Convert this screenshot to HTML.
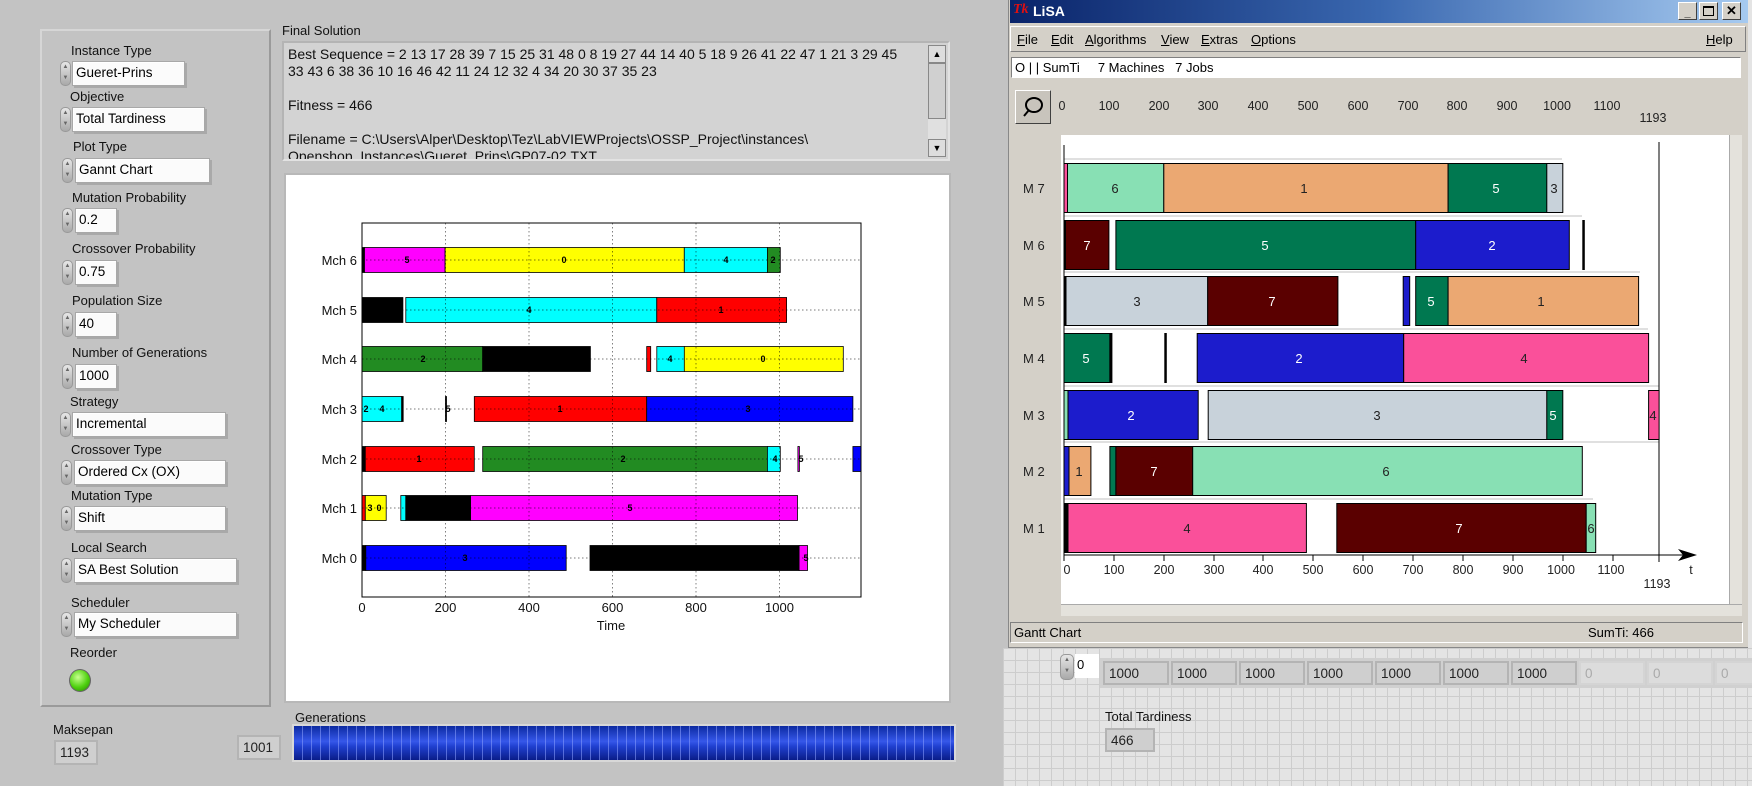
<!DOCTYPE html>
<html><head><meta charset="utf-8"><style>
*{margin:0;padding:0;box-sizing:border-box}
body{width:1752px;height:786px;overflow:hidden;background:#c3c3c3;font-family:"Liberation Sans",sans-serif;position:relative}
.a{position:absolute;white-space:nowrap}
.lbl{position:absolute;font-size:13px;color:#111;white-space:nowrap}
.box{position:absolute;background:#fbfbfb;border:1px solid #a8a8a8;box-shadow:inset 1px 1px 0 #fff, 2px 2px 0 #a9a9a9;font-size:13.5px;padding:3px 3px;height:25px}
.spin{position:absolute;width:11px;height:25px;border-radius:5px;background:linear-gradient(#e6e6e6,#a9a9a9);border:1px solid #999;font-size:6px;line-height:11px;text-align:center;color:#666}
.ro{position:absolute;background:#cfcfcf;border:2px solid #b4b4b4;font-size:13.5px;padding:3px 4px;color:#222}
.menu{font-size:13px;color:#000}
.menu u{text-decoration:underline}
</style></head><body>

<div class="a" style="left:40px;top:29px;width:231px;height:678px;border:2px solid #d6d6d6;border-right-color:#9a9a9a;border-bottom-color:#9a9a9a;background:#c3c3c3"></div>

<div class="lbl" style="left:71px;top:43px">Instance Type</div>
<div class="spin" style="left:60px;top:61px">▲<br>▼</div><div class="box" style="left:72px;top:61px;width:113px">Gueret-Prins</div>
<div class="lbl" style="left:70px;top:89px">Objective</div>
<div class="spin" style="left:60px;top:107px">▲<br>▼</div><div class="box" style="left:72px;top:107px;width:133px">Total Tardiness</div>
<div class="lbl" style="left:73px;top:139px">Plot Type</div>
<div class="spin" style="left:62px;top:158px">▲<br>▼</div><div class="box" style="left:75px;top:158px;width:135px">Gannt Chart</div>
<div class="lbl" style="left:72px;top:190px">Mutation Probability</div>
<div class="spin" style="left:62px;top:208px">▲<br>▼</div><div class="box" style="left:75px;top:208px;width:42px">0.2</div>
<div class="lbl" style="left:72px;top:241px">Crossover Probability</div>
<div class="spin" style="left:62px;top:260px">▲<br>▼</div><div class="box" style="left:75px;top:260px;width:42px">0.75</div>
<div class="lbl" style="left:72px;top:293px">Population Size</div>
<div class="spin" style="left:62px;top:312px">▲<br>▼</div><div class="box" style="left:75px;top:312px;width:42px">40</div>
<div class="lbl" style="left:72px;top:345px">Number of Generations</div>
<div class="spin" style="left:62px;top:364px">▲<br>▼</div><div class="box" style="left:75px;top:364px;width:42px">1000</div>
<div class="lbl" style="left:70px;top:394px">Strategy</div>
<div class="spin" style="left:60px;top:412px">▲<br>▼</div><div class="box" style="left:72px;top:412px;width:154px">Incremental</div>
<div class="lbl" style="left:71px;top:442px">Crossover Type</div>
<div class="spin" style="left:61px;top:460px">▲<br>▼</div><div class="box" style="left:74px;top:460px;width:152px">Ordered Cx (OX)</div>
<div class="lbl" style="left:71px;top:488px">Mutation Type</div>
<div class="spin" style="left:61px;top:506px">▲<br>▼</div><div class="box" style="left:74px;top:506px;width:152px">Shift</div>
<div class="lbl" style="left:71px;top:540px">Local Search</div>
<div class="spin" style="left:61px;top:558px">▲<br>▼</div><div class="box" style="left:74px;top:558px;width:163px">SA Best Solution</div>
<div class="lbl" style="left:71px;top:595px">Scheduler</div>
<div class="spin" style="left:61px;top:612px">▲<br>▼</div><div class="box" style="left:74px;top:612px;width:163px">My Scheduler</div>
<div class="lbl" style="left:70px;top:645px">Reorder</div>
<div class="a" style="left:69px;top:669px;width:22px;height:23px;border-radius:50%;background:radial-gradient(circle at 40% 35%,#c8ff90,#4ed10e 55%,#2a7a08);border:1px solid #666"></div>

<div class="lbl" style="left:53px;top:722px">Maksepan</div>
<div class="ro" style="left:54px;top:740px;width:44px;height:25px">1193</div>
<div class="ro" style="left:237px;top:735px;width:44px;height:25px">1001</div>
<div class="lbl" style="left:295px;top:710px">Generations</div>
<div class="a" style="left:292px;top:724px;width:664px;height:38px;border:2px solid #d8d8d8;background:repeating-linear-gradient(90deg,transparent 0 8px,rgba(140,160,255,.55) 8px 9px),linear-gradient(#0c2aa0,#3658ea 45%,#2040d0 60%,#0a1c88)"></div>

<div class="lbl" style="left:282px;top:23px">Final Solution</div>
<div class="a" style="left:282px;top:41px;width:668px;height:120px;background:#d3d3d3;border:2px solid #b4b4b4;border-right-color:#e2e2e2;border-bottom-color:#e2e2e2;overflow:hidden">
<div style="font-size:14px;line-height:17px;padding:3px 4px;color:#111;white-space:normal;width:625px">Best Sequence = 2 13 17 28 39 7 15 25 31 48 0 8 19 27 44 14 40 5 18 9 26 41 22 47 1 21 3 29 45 33 43 6 38 36 10 16 46 42 11 24 12 32 4 34 20 30 37 35 23<br><br>Fitness = 466<br><br>Filename = C:\Users\Alper\Desktop\Tez\LabVIEWProjects\OSSP_Project\instances\ Openshop_Instances\Gueret_Prins\GP07-02.TXT</div>
<div style="position:absolute;left:644px;top:2px;width:18px;height:112px;background:#e0e0e0">
<div style="height:18px;background:#ddd;border:1px solid #888;font-size:9px;text-align:center;line-height:16px">▲</div>
<div style="height:56px;background:#d0d0d0;border:1px solid #888"></div>
<div style="position:absolute;bottom:0;width:18px;height:18px;background:#ddd;border:1px solid #888;font-size:9px;text-align:center;line-height:16px">▼</div></div>
</div>

<div class="a" style="left:284px;top:173px;width:667px;height:530px;background:#fff;border:2px solid #b8b8b8"></div>

<div class="a" style="left:1008px;top:0;width:742px;height:648px;background:#d4d0c8;border:1px solid #888;border-top:none"></div>
<div class="a" style="left:1010px;top:0;width:738px;height:23px;background:linear-gradient(90deg,#0a246a,#3a68b0 50%,#a6caf0)"></div>
<div class="a" style="left:1013px;top:2px;font:italic bold 14px 'Liberation Serif',serif;color:#e01010">Tk</div>
<div class="a" style="left:1033px;top:3px;font-weight:bold;font-size:14px;color:#fff">LiSA</div>
<div class="a" style="left:1678px;top:2px;width:19px;height:18px;background:#d4d0c8;border:1px solid;border-color:#fff #404040 #404040 #fff;font-size:11px;text-align:center;line-height:20px;font-weight:bold">_</div>
<div class="a" style="left:1699px;top:2px;width:19px;height:18px;background:#d4d0c8;border:1px solid;border-color:#fff #404040 #404040 #fff"><div style="margin:3px;width:11px;height:10px;border:1px solid #000;border-top-width:2px"></div></div>
<div class="a" style="left:1722px;top:2px;width:19px;height:18px;background:#d4d0c8;border:1px solid;border-color:#fff #404040 #404040 #fff;font-size:13px;text-align:center;line-height:16px;font-weight:bold">✕</div>
<div class="a" style="left:1010px;top:26px;width:736px;height:26px;border:1px solid;border-color:#fff #808080 #808080 #fff"></div>
<div class="a menu" style="left:1017px;top:32px"><u>F</u>ile</div>
<div class="a menu" style="left:1051px;top:32px"><u>E</u>dit</div>
<div class="a menu" style="left:1085px;top:32px"><u>A</u>lgorithms</div>
<div class="a menu" style="left:1161px;top:32px"><u>V</u>iew</div>
<div class="a menu" style="left:1201px;top:32px"><u>E</u>xtras</div>
<div class="a menu" style="left:1251px;top:32px"><u>O</u>ptions</div>
<div class="a menu" style="left:1706px;top:32px"><u>H</u>elp</div>
<div class="a" style="left:1011px;top:57px;width:730px;height:21px;background:#fff;border:1px solid;border-color:#808080 #fff #fff #808080;font-size:13px;padding:2px 3px">O | | SumTi &nbsp;&nbsp;&nbsp; 7 Machines &nbsp; 7 Jobs</div>
<div class="a" style="left:1015px;top:90px;width:36px;height:34px;background:#c8c4bc;border:1px solid;border-color:#fff #404040 #404040 #fff"></div>
<svg class="a" style="left:1015px;top:90px" width="36" height="34"><ellipse cx="19" cy="15" rx="8" ry="7" fill="none" stroke="#000" stroke-width="2"/><line x1="14" y1="20" x2="9" y2="26" stroke="#000" stroke-width="2"/></svg>
<div class="a" style="left:1061px;top:135px;width:668px;height:469px;background:#fff"></div>
<div class="a" style="left:1729px;top:135px;width:13px;height:469px;background:#e4e2dc;border-left:1px solid #aaa"></div>
<div class="a" style="left:1061px;top:604px;width:681px;height:12px;background:#e4e2dc;border-top:1px solid #aaa"></div>
<div class="a" style="left:1010px;top:622px;width:733px;height:21px;border:1px solid;border-color:#808080 #fff #fff #808080;font-size:13px;padding:2px 3px">Gantt Chart<span style="position:absolute;left:577px">SumTi: 466</span></div>

<div class="a" style="left:1003px;top:648px;width:749px;height:138px;background-color:#e4e4e4;background-image:linear-gradient(90deg,#cdcdcd 1px,transparent 1px),linear-gradient(#cdcdcd 1px,transparent 1px);background-size:12px 12px"></div>
<div class="a" style="left:1748px;top:0;width:4px;height:648px;background:#e4e4e4"></div>
<div class="spin" style="left:1060px;top:654px;height:26px;width:14px">▲<br>▼</div>
<div class="a" style="left:1075px;top:654px;width:24px;height:24px;background:#fff;font-size:13px;padding:3px 2px">0</div>
<div class="a" style="left:1100px;top:658px;width:652px;height:30px;background:#d0d0d0"></div>
<div class="ro" style="left:1103px;top:661px;width:66px;height:24px">1000</div>
<div class="ro" style="left:1171px;top:661px;width:66px;height:24px">1000</div>
<div class="ro" style="left:1239px;top:661px;width:66px;height:24px">1000</div>
<div class="ro" style="left:1307px;top:661px;width:66px;height:24px">1000</div>
<div class="ro" style="left:1375px;top:661px;width:66px;height:24px">1000</div>
<div class="ro" style="left:1443px;top:661px;width:66px;height:24px">1000</div>
<div class="ro" style="left:1511px;top:661px;width:66px;height:24px">1000</div>
<div class="ro" style="left:1579px;top:661px;width:66px;height:24px;background:#dcdcdc;color:#aaa;border-color:#d4d4d4">0</div>
<div class="ro" style="left:1647px;top:661px;width:66px;height:24px;background:#dcdcdc;color:#aaa;border-color:#d4d4d4">0</div>
<div class="ro" style="left:1715px;top:661px;width:66px;height:24px;background:#dcdcdc;color:#aaa;border-color:#d4d4d4">0</div>
<div class="lbl" style="left:1105px;top:709px">Total Tardiness</div>
<div class="ro" style="left:1105px;top:728px;width:50px;height:24px">466</div>

<svg class="a" style="left:0;top:0" width="1752" height="786" font-family="Liberation Sans, sans-serif">
<g stroke="#000" stroke-width="0.8">
<rect x="362" y="247.5" width="2.5" height="25" fill="#000"/><rect x="364.5" y="247.5" width="80.6" height="25" fill="#f0f"/><rect x="445.1" y="247.5" width="239.2" height="25" fill="#ff0"/><rect x="684.3" y="247.5" width="83.1" height="25" fill="#0ff"/><rect x="767.4" y="247.5" width="12.9" height="25" fill="#228b22"/>
<rect x="362" y="297.5" width="40.9" height="25" fill="#000"/><rect x="405.8" y="297.5" width="250.9" height="25" fill="#0ff"/><rect x="656.8" y="297.5" width="129.8" height="25" fill="#f00"/>
<rect x="362" y="346.5" width="120.7" height="25" fill="#228b22"/><rect x="482.7" y="346.5" width="107.7" height="25" fill="#000"/><rect x="646.7" y="346.5" width="4" height="25" fill="#f00"/><rect x="656.8" y="346.5" width="27.6" height="25" fill="#0ff"/><rect x="684.3" y="346.5" width="159" height="25" fill="#ff0"/>
<rect x="362" y="396.5" width="39.7" height="25" fill="#0ff"/><rect x="401.7" y="396.5" width="1.5" height="25" fill="#000"/><rect x="445.5" y="396.5" width="1" height="25" fill="#000"/><rect x="474.3" y="396.5" width="172.4" height="25" fill="#f00"/><rect x="646.7" y="396.5" width="206.2" height="25" fill="#00f"/>
<rect x="362" y="446.5" width="3.3" height="25" fill="#000"/><rect x="365.3" y="446.5" width="109" height="25" fill="#f00"/><rect x="482.7" y="446.5" width="284.7" height="25" fill="#228b22"/><rect x="767.4" y="446.5" width="12.9" height="25" fill="#0ff"/><rect x="797.9" y="446.5" width="1.5" height="25" fill="#f0f"/><rect x="852.9" y="446.5" width="8.1" height="25" fill="#00f"/>
<rect x="362" y="495.5" width="3.3" height="25" fill="#f00"/><rect x="365.3" y="495.5" width="20.9" height="25" fill="#ff0"/><rect x="400.8" y="495.5" width="5" height="25" fill="#0ff"/><rect x="405.8" y="495.5" width="64.7" height="25" fill="#000"/><rect x="470.6" y="495.5" width="326.9" height="25" fill="#f0f"/>
<rect x="362" y="545.5" width="3.8" height="25" fill="#000"/><rect x="365.8" y="545.5" width="200.4" height="25" fill="#00f"/><rect x="590" y="545.5" width="209.2" height="25" fill="#000"/><rect x="799.1" y="545.5" width="8.4" height="25" fill="#f0f"/>
</g>
<g stroke="#000" stroke-width="0.7" stroke-dasharray="1.5,2.5" opacity="0.7">
<line x1="445.5" y1="223" x2="445.5" y2="597"/><line x1="529" y1="223" x2="529" y2="597"/><line x1="612.5" y1="223" x2="612.5" y2="597"/><line x1="696" y1="223" x2="696" y2="597"/><line x1="779.5" y1="223" x2="779.5" y2="597"/>
<line x1="362" y1="260" x2="861" y2="260"/><line x1="362" y1="310" x2="861" y2="310"/><line x1="362" y1="359" x2="861" y2="359"/><line x1="362" y1="409" x2="861" y2="409"/><line x1="362" y1="459" x2="861" y2="459"/><line x1="362" y1="508" x2="861" y2="508"/><line x1="362" y1="558" x2="861" y2="558"/>
</g>
<rect x="362" y="223" width="499" height="374" fill="none" stroke="#000" stroke-width="1"/>
<g font-size="9" font-weight="bold" text-anchor="middle" fill="#000">
<text x="407" y="263">5</text><text x="564" y="263">0</text><text x="726" y="263">4</text><text x="773" y="263">2</text>
<text x="529" y="313">4</text><text x="721" y="313">1</text>
<text x="423" y="362">2</text><text x="670" y="362">4</text><text x="763" y="362">0</text>
<text x="366" y="412">2</text><text x="382" y="412">4</text><text x="448" y="412">5</text><text x="560" y="412">1</text><text x="748" y="412">3</text>
<text x="419" y="462">1</text><text x="623" y="462">2</text><text x="775" y="462">4</text><text x="801" y="462">5</text>
<text x="370" y="511">3</text><text x="379" y="511">0</text><text x="630" y="511">5</text>
<text x="465" y="561">3</text><text x="806" y="561">5</text>
</g>
<g font-size="13" text-anchor="end" fill="#111">
<text x="357" y="265">Mch 6</text><text x="357" y="315">Mch 5</text><text x="357" y="364">Mch 4</text><text x="357" y="414">Mch 3</text><text x="357" y="464">Mch 2</text><text x="357" y="513">Mch 1</text><text x="357" y="563">Mch 0</text>
</g>
<g font-size="13" text-anchor="middle" fill="#111">
<text x="362" y="612">0</text><text x="445.5" y="612">200</text><text x="529" y="612">400</text><text x="612.5" y="612">600</text><text x="696" y="612">800</text><text x="779.5" y="612">1000</text><text x="611" y="630">Time</text>
</g>

<g stroke="#c0c0c0" stroke-width="1">
<line x1="1064" y1="159" x2="1562" y2="159"/><line x1="1064" y1="216" x2="1582" y2="216"/><line x1="1064" y1="272" x2="1640" y2="272"/><line x1="1064" y1="329" x2="1648" y2="329"/><line x1="1064" y1="386" x2="1659" y2="386"/><line x1="1064" y1="442" x2="1659" y2="442"/><line x1="1064" y1="499" x2="1593" y2="499"/>
</g>
<line x1="1064" y1="145" x2="1064" y2="555" stroke="#000"/>
<line x1="1659" y1="142" x2="1659" y2="562" stroke="#000"/>
<g stroke="#000" stroke-width="1">
<rect x="1064" y="163.5" width="3.5" height="49" fill="#fa509a"/><rect x="1067.5" y="163.5" width="96.3" height="49" fill="#88e0b4"/><rect x="1163.8" y="163.5" width="284.3" height="49" fill="#eba872"/><rect x="1448.1" y="163.5" width="98.8" height="49" fill="#007850"/><rect x="1546.8" y="163.5" width="16" height="49" fill="#c8d2da"/>
<rect x="1064" y="220.5" width="1.5" height="49" fill="#000"/><rect x="1065.5" y="220.5" width="43.4" height="49" fill="#5a0000"/><rect x="1115.9" y="220.5" width="299.8" height="49" fill="#007850"/><rect x="1415.7" y="220.5" width="153.6" height="49" fill="#1c1ccc"/><rect x="1582.8" y="220.5" width="1.5" height="49" fill="#000"/>
<rect x="1064" y="276.5" width="2" height="49" fill="#000"/><rect x="1066" y="276.5" width="141.7" height="49" fill="#c8d2da"/><rect x="1207.7" y="276.5" width="130.2" height="49" fill="#5a0000"/><rect x="1403.2" y="276.5" width="6.5" height="49" fill="#1c1ccc"/><rect x="1415.7" y="276.5" width="32.4" height="49" fill="#007850"/><rect x="1448.1" y="276.5" width="190.5" height="49" fill="#eba872"/>
<rect x="1064" y="333.5" width="45.9" height="49" fill="#007850"/><rect x="1109.9" y="333.5" width="2" height="49" fill="#000"/><rect x="1164.8" y="333.5" width="1.5" height="49" fill="#000"/><rect x="1197.2" y="333.5" width="206.5" height="49" fill="#1c1ccc"/><rect x="1403.7" y="333.5" width="244.9" height="49" fill="#fa509a"/>
<rect x="1064" y="390.5" width="4" height="49" fill="#88e0b4"/><rect x="1068" y="390.5" width="130.2" height="49" fill="#1c1ccc"/><rect x="1208.2" y="390.5" width="338.7" height="49" fill="#c8d2da"/><rect x="1546.8" y="390.5" width="16" height="49" fill="#007850"/><rect x="1648.6" y="390.5" width="10.5" height="49" fill="#fa509a"/>
<rect x="1064" y="446.5" width="5" height="49" fill="#1c1ccc"/><rect x="1069" y="446.5" width="21.9" height="49" fill="#eba872"/><rect x="1109.9" y="446.5" width="6" height="49" fill="#007850"/><rect x="1115.9" y="446.5" width="76.8" height="49" fill="#5a0000"/><rect x="1192.7" y="446.5" width="389.6" height="49" fill="#88e0b4"/>
<rect x="1064" y="503.5" width="4" height="49" fill="#000"/><rect x="1068" y="503.5" width="238.4" height="49" fill="#fa509a"/><rect x="1336.8" y="503.5" width="249.4" height="49" fill="#5a0000"/><rect x="1586.2" y="503.5" width="9.5" height="49" fill="#88e0b4"/>
</g>
<g font-size="13" text-anchor="middle">
<text x="1115" y="193" fill="#222">6</text><text x="1304" y="193" fill="#222">1</text><text x="1496" y="193" fill="#fff">5</text><text x="1554" y="193" fill="#222">3</text>
<text x="1087" y="250" fill="#fff">7</text><text x="1265" y="250" fill="#fff">5</text><text x="1492" y="250" fill="#fff">2</text>
<text x="1137" y="306" fill="#222">3</text><text x="1272" y="306" fill="#fff">7</text><text x="1431" y="306" fill="#fff">5</text><text x="1541" y="306" fill="#222">1</text>
<text x="1086" y="363" fill="#fff">5</text><text x="1299" y="363" fill="#fff">2</text><text x="1524" y="363" fill="#222">4</text>
<text x="1131" y="420" fill="#fff">2</text><text x="1377" y="420" fill="#222">3</text><text x="1553" y="420" fill="#fff">5</text><text x="1653" y="420" fill="#222">4</text>
<text x="1079" y="476" fill="#222">1</text><text x="1154" y="476" fill="#fff">7</text><text x="1386" y="476" fill="#222">6</text>
<text x="1187" y="533" fill="#222">4</text><text x="1459" y="533" fill="#fff">7</text><text x="1591" y="533" fill="#222">6</text>
</g>
<g font-size="13" fill="#222">
<text x="1023" y="193">M 7</text><text x="1023" y="250">M 6</text><text x="1023" y="306">M 5</text><text x="1023" y="363">M 4</text><text x="1023" y="420">M 3</text><text x="1023" y="476">M 2</text><text x="1023" y="533">M 1</text>
</g>
<line x1="1064" y1="555" x2="1690" y2="555" stroke="#000"/>
<polygon points="1697,555 1678,549 1683,555 1678,561" fill="#000"/>
<g stroke="#000"><line x1="1064" y1="555" x2="1064" y2="561"/><line x1="1114" y1="555" x2="1114" y2="561"/><line x1="1164" y1="555" x2="1164" y2="561"/><line x1="1214" y1="555" x2="1214" y2="561"/><line x1="1263" y1="555" x2="1263" y2="561"/><line x1="1313" y1="555" x2="1313" y2="561"/><line x1="1363" y1="555" x2="1363" y2="561"/><line x1="1413" y1="555" x2="1413" y2="561"/><line x1="1463" y1="555" x2="1463" y2="561"/><line x1="1513" y1="555" x2="1513" y2="561"/><line x1="1563" y1="555" x2="1563" y2="561"/><line x1="1613" y1="555" x2="1613" y2="561"/></g>
<g font-size="12.5" fill="#222" text-anchor="middle">
<text x="1067" y="574">0</text><text x="1114" y="574">100</text><text x="1164" y="574">200</text><text x="1214" y="574">300</text><text x="1263" y="574">400</text><text x="1313" y="574">500</text><text x="1363" y="574">600</text><text x="1413" y="574">700</text><text x="1463" y="574">800</text><text x="1513" y="574">900</text><text x="1561" y="574">1000</text><text x="1611" y="574">1100</text><text x="1691" y="574">t</text><text x="1657" y="588">1193</text>
<text x="1062" y="110">0</text><text x="1109" y="110">100</text><text x="1159" y="110">200</text><text x="1208" y="110">300</text><text x="1258" y="110">400</text><text x="1308" y="110">500</text><text x="1358" y="110">600</text><text x="1408" y="110">700</text><text x="1457" y="110">800</text><text x="1507" y="110">900</text><text x="1557" y="110">1000</text><text x="1607" y="110">1100</text><text x="1653" y="122">1193</text>
</g>
</svg>
</body></html>
